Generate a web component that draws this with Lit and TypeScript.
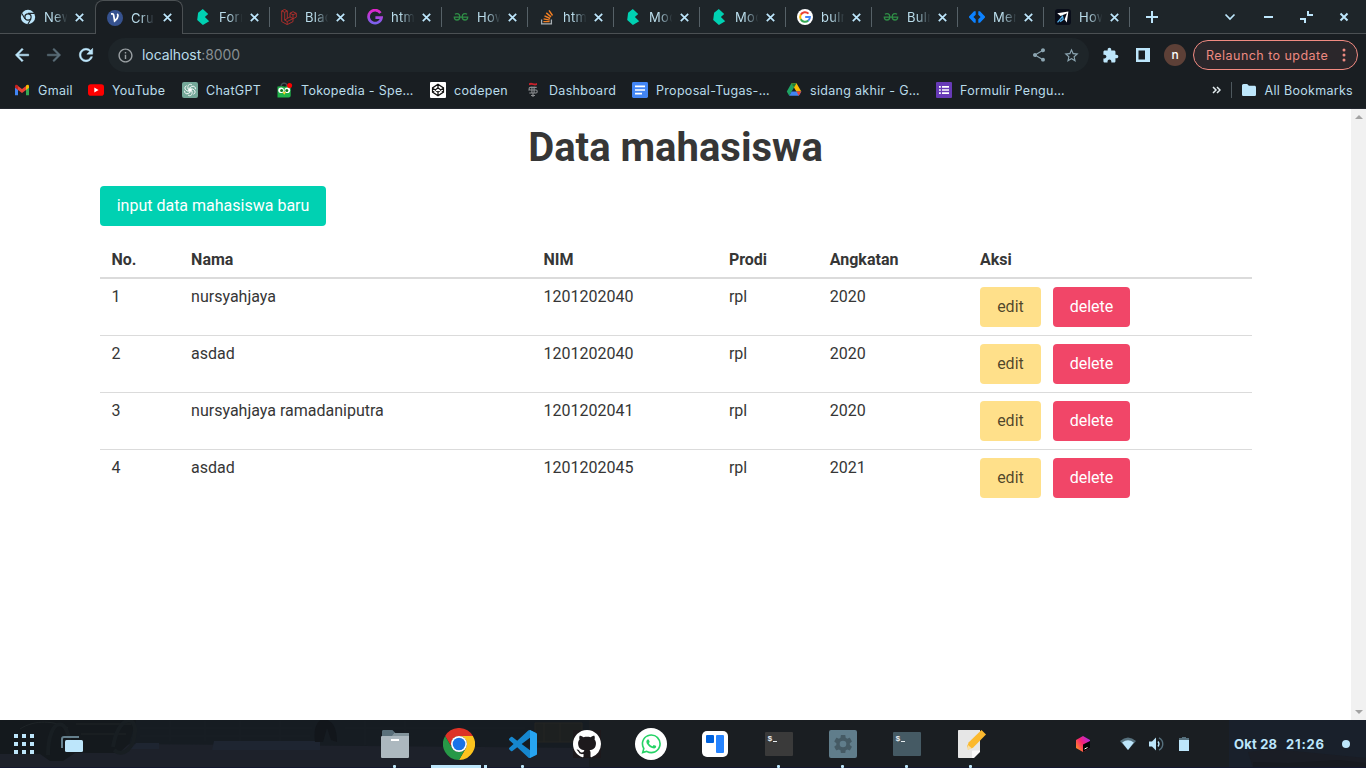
import { LitElement, html, css, svg } from "lit";
import { customElement } from "lit/decorators.js";

const ICE = "#bde6fb";

const icon = (size: number, box: number, body: unknown) =>
  html`<svg width=${size} height=${size} viewBox="0 0 ${box} ${box}" fill="none">${body}</svg>`;

/* ---------- favicons ---------- */
const chromeMono = icon(16, 16, svg`
  <circle cx="8" cy="8" r="7.2" fill=${ICE}/>
  <circle cx="8" cy="8" r="3.7" fill="#1e2529"/>
  <path d="M8 4.4H14.6M4.9 9.7 1.9 4.4M11 9.8 7.7 15.6" stroke="#1e2529" stroke-width="1.1"/>
  <circle cx="8" cy="8" r="2.5" fill=${ICE}/>`);
const vIcon = icon(16, 16, svg`
  <circle cx="8" cy="8" r="8" fill="#36528f"/>
  <path d="M4 3.900h1.500c.7 0 1 .4 1.100 1L7.600 11c2-1.600 3.400-3.600 3.400-5.300 0-.8-.3-1.300-.9-1.700" stroke="#fff" stroke-width="1.700"/>`);
const bulma = icon(16, 16, svg`<path d="m2.2 11 .9-7.3L7.8 0l5.4 5-3.3 3 4.3 4.3L7.9 16z" fill="#00d1b2"/>`);
const laravel = icon(16, 16, svg`
  <path d="M.7 1.9 3.6.5l2.7 1.4v7.5l2.7-1.5V4.2L12 2.7l3.3 1.6v3.8L12 9.8v2.8l-5.8 3-5.5-3zM.7 1.9l3 1.4 2.6-1.4M3.7 3.3v7.8l2.5 1.4 5.8-2.9M6.2 12.5v3M9 4.2l3 1.6 3.3-1.5M12 5.8v3.9M9 7.9l3 1.8M6.3 9.4l-2.6 1.7" stroke="#b52f2b" stroke-width=".9"/>`);
const gPurple = icon(16, 16, svg`
  <defs><linearGradient id="gp" x1="0" y1="0" x2="0" y2="1"><stop stop-color="#e024c8"/><stop offset="1" stop-color="#7c62ee"/></linearGradient></defs>
  <path d="M13.5 4A6.5 6.5 0 1 0 14.5 8.7H8.4" stroke="url(#gp)" stroke-width="2.7"/>`);
const gfg = icon(16, 16, svg`
  <path d="M1.9 5.2c2.4-1.3 4.9-.2 4.9 2.5 0 2.2-1.2 3.3-2.8 3.3-1.5 0-2.6-.9-2.7-2.8H14.7c-.1 1.9-1.2 2.8-2.7 2.8-1.6 0-2.8-1.1-2.8-3.3 0-2.7 2.5-3.8 4.9-2.5" stroke="#2f8d46" stroke-width="1.3"/>`);
const stack = icon(16, 16, svg`
  <path d="M2.6 10.6v4.3h9.8v-4.3" stroke="#a9b0b4" stroke-width="1.3"/>
  <path d="M4.4 12.6h6.2M4.6 9.9l6.1 1.2M5.5 6.9l5.6 2.6M7.3 3.9l4.7 4M10 1.4l3.5 5.1" stroke="#f48024" stroke-width="1.4"/>`);
const google = icon(16, 16, svg`
  <circle cx="8" cy="8" r="8" fill="#fff"/>
  <g stroke-width="2"><path d="M11.5 4.6A4.9 4.9 0 0 0 3.7 5.8" stroke="#ea4335"/>
  <path d="M3.8 5.6a4.9 4.9 0 0 0 0 4.8" stroke="#fbbc05"/>
  <path d="M3.7 10.2a4.9 4.9 0 0 0 7.6 1.4" stroke="#34a853"/>
  <path d="M11.2 11.7A4.9 4.9 0 0 0 12.9 8H8.2" stroke="#4285f4"/></g>`);
const diamonds = icon(16, 16, svg`
  <path d="M6.7 2.2v3.5L4.4 8l2.3 2.3v3.5H5L0 8.6V7.4l5-5.2zM9.3 2.2v3.5L11.6 8l-2.3 2.3v3.5H11l5-5.2V7.4l-5-5.2z" fill="#0c82ff"/>`);
const plane = icon(16, 16, svg`
  <rect width="16" height="16" rx="3" fill="#090d19"/>
  <path d="M2.2 4.2 13.4 2.5 11.8 13.6 9.6 10.4 12 4.2 5.6 7z" fill="#fff"/>
  <path d="m2.5 13.3 5-5.8.8 3.3M5 12.6l2.8-2" stroke="#52aee8" stroke-width="1.3"/>`);

/* ---------- bookmark icons ---------- */
const gmail = icon(16, 16, svg`
  <path d="M1 4v9.3h3V6.8z" fill="#4285f4"/><path d="M15 4v9.3h-3V6.8z" fill="#34a853"/>
  <path d="M4 3.9v4L8 11l4-3.1v-4L8 7z" fill="#ea4335"/>
  <path d="M1 4.4C1 2.7 2.6 2.4 4 3.6v4.3L1 5.8z" fill="#c5221f"/>
  <path d="M15 4.4c0-1.7-1.6-2-3-.8v4.3l3-2.1z" fill="#fbbc04"/>`);
const youtube = icon(16, 16, svg`<rect y="2.3" width="16" height="11.4" rx="2.8" fill="#f00"/><path d="m6.3 5.6 4.3 2.4-4.3 2.4z" fill="#fff"/>`);
const chatgpt = icon(16, 16, svg`
  <rect width="16" height="16" rx="2" fill="#74a899"/>
  <g stroke="#fff" stroke-width=".85">
  ${[0, 60, 120, 180, 240, 300].map((a) => svg`<path transform="rotate(${a} 8 8)" d="M5.9 6.9V4.7a2.4 2.4 0 0 1 4.1-1.7M5.9 6.9l4 2.3"/>`)}</g>`);
const tokopedia = icon(16, 16, svg`
  <path d="M4 4.200C4.500.2 9.500.2 10 4" stroke="#465057" stroke-width="1.200"/>
  <path d="M.5 4.400c3 .2 5-.6 6.900.4 1.500-1 3.600-.6 6.300-.4v9c0 1.200-.8 2-2 2H.5z" fill="#21b34a"/>
  <circle cx="4.100" cy="8.300" r="2.800" fill="#fff"/><circle cx="10.300" cy="8.300" r="2.800" fill="#fff"/>
  <circle cx="4.600" cy="8.400" r="1.500" fill="#172"/><circle cx="9.800" cy="8.400" r="1.500" fill="#172"/>
  <path d="m5.700 10.600 1.500-1.200 1.600 1.200-1.600 2.200z" fill="#ffd32b"/><circle cx="12.600" cy="3.500" r="2.500" fill="#f00"/>`);
const codepen = icon(16, 16, svg`
  <rect width="16" height="16" rx="1" fill="#fff"/>
  <path d="m8 2.3 5.5 3.6v4.2L8 13.7l-5.5-3.6V5.9zM8 2.3v3.5M8 10.2v3.5M2.5 5.9 8 10.2l5.5-4.3M2.5 10.1 8 5.8l5.5 4.3" stroke="#111" stroke-width="1.2"/>`);
const telkom = icon(16, 16, svg`
  <path d="M4 1.2q2-.8 4 0t4-.2V3q-2 .8-4 0T4 3.2z" fill="#c9202a"/>
  <path d="M11.700 5.400H5.200c-1.400 0-1.400 2.600 0 2.600H11c1.600 0 1.600 3 0 3H4.300M6.900 4.500v6.800M9.100 4.500v6.800M8 11v4M6 13.500h4M5.300 8h-2" stroke="#8b8d90" stroke-width="1.100"/>`);
const docs = icon(16, 16, svg`<rect width="16" height="16" rx="1.400" fill="#4285f4"/><path d="M3 4.400h10M3 8h10M3 11.600h7" stroke="#fff" stroke-width="1.600"/>`);
const drive = icon(16, 16, svg`
  <path d="M5.400 1.200 8 5.600l-4.800 8.200L.8 9.600z" fill="#1fa463"/>
  <path d="M5.400 1.200h5.100l4.800 8.400h-4.900L8 5.500z" fill="#fbbc04"/>
  <path d="M5.400 1.200h5.100L8 5.600z" fill="#188038"/>
  <path d="M5.700 9.600h9.600l-2.500 4.200H3.200z" fill="#4285f4"/><path d="M10.400 9.600h4.900l-2.500 4.200z" fill="#ea4335"/>`);
const forms = icon(16, 16, svg`<rect width="16" height="16" rx="1" fill="#673ab7"/><path d="M6 4.800h7M6 8h7M6 11.200h7M3 4.800h1.800M3 8h1.800M3 11.200h1.800" stroke="#fff" stroke-width="1.700"/>`);
const folder = icon(16, 16, svg`<path d="M1 3.800C1 2.700 1.600 2 2.600 2h3.600l1.700 1.800h5.500c1 0 1.600.6 1.600 1.600v7c0 1-.6 1.600-1.600 1.600H2.600C1.600 14 1 13.400 1 12.400z" fill=${ICE}/>`);

/* ---------- toolbar icons ---------- */
const back = svg`<path fill="currentColor" stroke="currentColor" stroke-width=".6" d="M20 11H7.83l5.59-5.59L12 4l-8 8 8 8 1.41-1.41L7.83 13H20v-2z"/>`;
const reload = svg`<path fill="currentColor" d="M17.65 6.35C16.2 4.9 14.21 4 12 4c-4.42 0-7.99 3.58-7.99 8s3.57 8 7.99 8c3.73 0 6.84-2.55 7.73-6h-2.08c-.82 2.33-3.04 4-5.65 4-3.31 0-6-2.69-6-6s2.69-6 6-6c1.66 0 3.14.69 4.22 1.78L13 11h7V4l-2.35 2.35z" stroke="currentColor" stroke-width=".6"/>`;
const info = svg`<path fill="currentColor" d="M11 7h2v2h-2zm0 4h2v6h-2zm1-9C6.48 2 2 6.48 2 12s4.48 10 10 10 10-4.48 10-10S17.52 2 12 2zm0 18c-4.41 0-8-3.59-8-8s3.59-8 8-8 8 3.59 8 8-3.59 8-8 8z"/>`;
const share = svg`<path fill="currentColor" d="M18 16.08c-.76 0-1.44.3-1.96.77L8.91 12.7c.05-.23.09-.46.09-.7s-.04-.47-.09-.7l7.05-4.11c.54.5 1.25.81 2.04.81 1.66 0 3-1.34 3-3s-1.34-3-3-3-3 1.34-3 3c0 .24.04.47.09.7L8.04 9.81C7.5 9.31 6.79 9 6 9c-1.66 0-3 1.34-3 3s1.34 3 3 3c.79 0 1.5-.31 2.04-.81l7.12 4.16c-.05.21-.08.43-.08.65 0 1.61 1.31 2.92 2.92 2.92 1.61 0 2.92-1.31 2.92-2.92s-1.31-2.92-2.92-2.92z"/>`;
const star = svg`<path fill="currentColor" d="M22 9.24l-7.19-.62L12 2 9.19 8.63 2 9.24l5.46 4.73L5.82 21 12 17.27 18.18 21l-1.63-7.03L22 9.24zM12 15.4l-3.76 2.27 1-4.28-3.32-2.88 4.38-.38L12 6.1l1.71 4.04 4.38.38-3.32 2.88 1 4.28L12 15.4z"/>`;
const puzzle = svg`<path fill="currentColor" d="M20.5 11H19V7c0-1.1-.9-2-2-2h-4V3.5C13 2.12 11.88 1 10.5 1S8 2.12 8 3.5V5H4c-1.1 0-1.99.9-1.99 2v3.8H3.5c1.49 0 2.7 1.21 2.7 2.7s-1.21 2.7-2.7 2.7H2V20c0 1.1.9 2 2 2h3.8v-1.5c0-1.49 1.21-2.7 2.7-2.7 1.49 0 2.7 1.21 2.7 2.7V22H17c1.1 0 2-.9 2-2v-4h1.5c1.38 0 2.5-1.12 2.5-2.5S21.88 11 20.5 11z"/>`;
const closeX = icon(9, 9, svg`<path d="m.8.8 7.400 7.400M8.200.8.8 8.200" stroke=${ICE} stroke-width="1.700"/>`);

/* ---------- dock icons ---------- */
const files = icon(32, 32, svg`
  <path d="M3 3.500C3 2.600 3.500 2 4.400 2h9l3 3H28c.8 0 1.300.5 1.300 1.300V9H3z" fill="#5a707b"/>
  <path d="M2 9.200C2 8.500 2.600 8 3.300 8h10l2.500-3H28.600c.8 0 1.400.5 1.400 1.300v22.400c0 .8-.6 1.300-1.300 1.300H3.300C2.600 30 2 29.500 2 28.700z" fill="#acb8bf"/>
  <path d="M13.300 8l2.500-3h12.900c.6 0 1.300.5 1.300 1.300V8z" fill="#82939b"/><rect x="12" y="11" width="8" height="2" fill="#fff"/>`);
const chrome = icon(32, 48, svg`
  <path d="M3.200 12A24 24 0 0 1 44.800 12H24A12 12 0 0 0 13.600 30Z" fill="#dd3226"/>
  <path d="M44.800 12A24 24 0 0 1 24 48L34.400 30A12 12 0 0 0 24 12Z" fill="#fcc31e"/>
  <path d="M24 48A24 24 0 0 1 3.200 12L13.600 30A12 12 0 0 0 34.400 30Z" fill="#279847"/>
  <circle cx="24" cy="24" r="12" fill="#fff"/><circle cx="24" cy="24" r="9.500" fill="#1a73e8"/>`);
const vscode = icon(28, 24, svg`
  <path fill="#1687cf" d="M23.15 2.587L18.21.21a1.494 1.494 0 0 0-1.705.29l-9.46 8.63-4.12-3.128a.999.999 0 0 0-1.276.057L.327 7.261A1 1 0 0 0 .326 8.74L3.899 12 .326 15.26a1 1 0 0 0 .001 1.479L1.65 17.94a.999.999 0 0 0 1.276.057l4.12-3.128 9.46 8.63a1.492 1.492 0 0 0 1.704.29l4.942-2.377A1.5 1.5 0 0 0 24 20.06V3.939a1.5 1.5 0 0 0-.85-1.352zm-5.146 14.861L10.826 12l7.178-5.448v10.896z"/>
  <path d="M18 .1 23.150 2.587A1.500 1.500 0 0 1 24 3.939v16.120a1.500 1.500 0 0 1-.85 1.350L18 23.900z" fill="#27a4f1"/>`);
const github = icon(28, 16, svg`
  <rect width="16" height="16" fill="#1d191c"/>
  <path fill="#fff" d="M8 0C3.58 0 0 3.58 0 8c0 3.54 2.29 6.53 5.47 7.59.4.07.55-.17.55-.38 0-.19-.01-.82-.01-1.49-2.01.37-2.53-.49-2.69-.94-.09-.23-.48-.94-.82-1.13-.28-.15-.68-.52-.01-.53.63-.01 1.08.58 1.23.82.72 1.21 1.87.87 2.33.66.07-.52.28-.87.51-1.07-1.78-.2-3.64-.89-3.64-3.95 0-.87.31-1.59.82-2.15-.08-.2-.36-1.02.08-2.12 0 0 .67-.21 2.2.82.64-.18 1.32-.27 2-.27s1.36.09 2 .27c1.53-1.04 2.2-.82 2.2-.82.44 1.1.16 1.92.08 2.12.51.56.82 1.27.82 2.15 0 3.07-1.87 3.75-3.65 3.95.29.25.54.73.54 1.48 0 1.07-.01 1.93-.01 2.2 0 .21.15.46.55.38A8.01 8.01 0 0 0 16 8c0-4.42-3.58-8-8-8z"/>`);
const whatsapp = icon(32, 32, svg`
  <circle cx="16" cy="16" r="16" fill="#fff"/>
  <path transform="translate(6.500 6.200) scale(.81)" fill="#25d366" d="M17.472 14.382c-.297-.149-1.758-.867-2.03-.967-.273-.099-.471-.148-.67.15-.197.297-.767.966-.94 1.164-.173.199-.347.223-.644.075-.297-.15-1.255-.463-2.39-1.475-.883-.788-1.48-1.761-1.653-2.059-.173-.297-.018-.458.13-.606.134-.133.298-.347.446-.52.149-.174.198-.298.298-.497.099-.198.05-.371-.025-.52-.075-.149-.669-1.612-.916-2.207-.242-.579-.487-.5-.669-.51-.173-.008-.371-.01-.57-.01-.198 0-.52.074-.792.372-.272.297-1.04 1.016-1.04 2.479 0 1.462 1.065 2.875 1.213 3.074.149.198 2.096 3.2 5.077 4.487.709.306 1.262.489 1.694.625.712.227 1.36.195 1.871.118.571-.085 1.758-.719 2.006-1.413.248-.694.248-1.289.173-1.413-.074-.124-.272-.198-.57-.347m-5.421 7.403h-.004a9.87 9.87 0 01-5.031-1.378l-.361-.214-3.741.982.998-3.648-.235-.374a9.86 9.86 0 01-1.51-5.26c.001-5.45 4.436-9.884 9.888-9.884 2.64 0 5.122 1.03 6.988 2.898a9.825 9.825 0 012.893 6.994c-.003 5.45-4.437 9.884-9.885 9.884m8.413-18.297A11.815 11.815 0 0012.05 0C5.495 0 .16 5.335.157 11.892c0 2.096.547 4.142 1.588 5.945L.057 24l6.305-1.654a11.882 11.882 0 005.683 1.448h.005c6.554 0 11.89-5.335 11.893-11.893a11.821 11.821 0 00-3.48-8.413z"/>`);
const board = icon(32, 32, svg`
  <rect x="3" y="3" width="26" height="26" rx="5" fill="#fff"/><rect x="7" y="7" width="8" height="8" rx="1" fill="#0062dd"/><rect x="17" y="7" width="8" height="18" rx="1" fill="#2684ff"/>`);
const terminal = (bg: string) => icon(32, 32, svg`
  <rect x="2" y="4" width="28" height="24" rx="1" fill=${bg}/>
  <text x="4.500" y="13" font-family="Liberation Mono" font-size="8" font-weight="700" fill="#e5ecef">$</text><path d="M10 13.500h4" stroke="#e5ecef"/>`);
const settings = icon(32, 32, svg`
  <rect x="2" y="2" width="28" height="28" rx="2" fill="#607d8b"/>
  <path transform="translate(4.800 4.800) scale(.94)" fill="#455a64" d="M19.14 12.94c.04-.3.06-.61.06-.94 0-.32-.02-.64-.07-.94l2.03-1.58c.18-.14.23-.41.12-.61l-1.92-3.32c-.12-.22-.37-.29-.59-.22l-2.39.96c-.5-.38-1.03-.7-1.62-.94l-.36-2.54c-.04-.24-.24-.41-.48-.41h-3.84c-.24 0-.43.17-.47.41l-.36 2.54c-.59.24-1.13.57-1.62.94l-2.39-.96c-.22-.08-.47 0-.59.22L2.74 8.87c-.12.21-.08.47.12.61l2.03 1.58c-.05.3-.09.63-.09.94s.02.64.07.94l-2.03 1.58c-.18.14-.23.41-.12.61l1.92 3.32c.12.22.37.29.59.22l2.39-.96c.5.38 1.03.7 1.62.94l.36 2.54c.05.24.24.41.48.41h3.84c.24 0 .44-.17.47-.41l.36-2.54c.59-.24 1.13-.56 1.62-.94l2.39.96c.22.08.47 0 .59-.22l1.92-3.32c.12-.22.07-.47-.12-.61l-2.01-1.58z"/>
  <circle cx="16" cy="16" r="3.300" fill="#607d8b"/>`);
const editor = icon(32, 32, svg`
  <path d="M4 2h21v20.500L18 30H4c-.6 0-1-.4-1-1V3c0-.6.400-1 1-1z" fill="#e6e6e6"/>
  <path d="M25 22.500V24l-6 6h-2v-6.500c0-.6.400-1 1-1z" fill="#fafafa"/>
  <path d="m12.200 18 1.600-3.800L26.500 2l4.500 4.500L18 19.800l-4.800 1.600z" fill="#fbb92e"/><path d="m13 17 4 3.500-4.700 1.200z" fill="#f9dfa5"/>`);

const tabs: [unknown, string][] = [
  [chromeMono, "New"], [vIcon, "Crud"], [bulma, "Form"], [laravel, "Blad"],
  [gPurple, "html"], [gfg, "How"], [stack, "html"], [bulma, "Mod"], [bulma, "Mod"],
  [google, "bulm"], [gfg, "Bulm"], [diamonds, "Men"], [plane, "How"],
];

const bookmarks: [unknown, string, number][] = [
  [gmail, "Gmail", 74], [youtube, "YouTube", 94], [chatgpt, "ChatGPT", 95], [tokopedia, "Tokopedia - Spe…", 153],
  [codepen, "codepen", 95], [telkom, "Dashboard", 107], [docs, "Proposal-Tugas-…", 154],
  [drive, "sidang akhir - G…", 150], [forms, "Formulir Pengu…", 140],
];

const students = [
  ["1", "nursyahjaya", "1201202040", "rpl", "2020"],
  ["2", "asdad", "1201202040", "rpl", "2020"],
  ["3", "nursyahjaya ramadaniputra", "1201202041", "rpl", "2020"],
  ["4", "asdad", "1201202045", "rpl", "2021"],
];

@customElement("browser-chrome")
class BrowserChrome extends LitElement {
  static styles = css`
    :host { display: block; height: 109px; background: #191e22; color: #b9dcea; font: 13px/16px Inter, sans-serif; box-sizing: border-box; border-bottom: 1px solid #23272f; }
    svg { display: block; flex: none; }
    .strip { display: flex; height: 34px; background: linear-gradient(#4b5053, #4b5053) bottom / 100% 1px no-repeat #1e2529; padding-left: 11px; box-sizing: border-box; }
    .tab { display: flex; align-items: center; width: 86px; height: 34px; padding-left: 11px; box-sizing: border-box; flex: none; background: linear-gradient(#566167, #566167) right 7px / 1px 20px no-repeat; }
    .tab.plain { background: none; padding-left: 9px; }
    .tab.active { background: #191e22; width: 88px; margin: 0 1px 0 -2px; padding-left: 11px; border: 1px solid #4b5053; border-bottom: 0; border-radius: 8px 8px 0 0; }
    .name { width: 24px; margin: 0 7px 0 8px; overflow: hidden; white-space: nowrap; letter-spacing: .3px; -webkit-mask-image: linear-gradient(90deg, #000 40%, transparent 98%); mask-image: linear-gradient(90deg, #000 40%, transparent 98%); }
    .active .name { margin-right: 8px; }
    .controls { display: flex; align-items: center; width: 237px; height: 34px; color: #bde6fb; flex: none; margin-left: -1px; }
    .bar { display: flex; align-items: center; height: 42px; color: #bde6fb; padding: 0 8px 0 12px; }
    .nav { display: flex; gap: 12px; width: 96px; flex: none; }
    .dim { color: #5b6e79; }
    .fwd { transform: scaleX(-1); }
    .omni { display: flex; flex: none; align-items: center; width: 981px; height: 34px; box-sizing: border-box; border-radius: 17px; background: #1e2529; padding: 0 9px 0 9px; color: #9aa0a3; }
    .url { flex: 1; font-size: 14px; margin-left: 8px; letter-spacing: -.07px; color: #878e91; }
    .host { color: #b9dcea; }
    .end { display: flex; align-items: center; gap: 16px; color: #8ca5b1; }
    .tools { display: flex; align-items: center; margin-left: 13px; gap: 13px; flex: none; }
    .panel { margin-left: 3px; }
    .avatar { width: 22px; height: 22px; border-radius: 50%; background: #5d4037; color: #fff; text-align: center; line-height: 21px; font-size: 12px; font-weight: 500; }
    .relaunch { display: flex; align-items: center; justify-content: space-between; width: 165px; height: 30px; border: 1px solid #f28b82; border-radius: 15px; box-sizing: border-box; background: #2b272b; color: #ee8a81; margin-left: -6px; padding: 0 11px 0 12px; font-size: 12.500px; letter-spacing: .46px; white-space: nowrap; }
    .label { margin-top: 1px; }
    .marks { display: flex; align-items: center; height: 28px; padding: 0 14px; }
    .mark { display: flex; align-items: center; gap: 8px; white-space: nowrap; font-size: 12.500px; letter-spacing: .3px; flex: none; }
    .mark span { padding-top: 1px; }
    .rest { display: flex; align-items: center; margin-left: auto; margin-right: -1px; }
    .div { width: 1px; height: 16px; background: #4e585e; margin: 0 9px 0 10px; }
  `;
  render() {
    return html`
      <div class="strip">
        ${tabs.map(([ic, name], i) => html`<div class="tab ${i === 1 ? "active" : i === 0 ? "plain" : ""}">${ic}<span class="name">${name}</span>${closeX}</div>`)}
        <div class="controls"><svg width="237" height="34" viewBox="0 0 237 34" fill="none" stroke="currentColor" stroke-width="2">
          <path d="M17 17h12M23 11v12M135 17h9"/><path d="m96.500 14.500 4.500 4.500 4.500-4.500" stroke-width="1.700"/>
          <path d="M171 19h5v4M179 11v4h5" /><path d="m211.500 13.500 7 7m0-7-7 7"/></svg></div>
      </div>
      <div class="bar">
        <div class="nav">${icon(20, 24, back)}<span class="dim fwd">${icon(20, 24, back)}</span>${icon(20, 24, reload)}</div>
        <div class="omni">${icon(17, 24, info)}<span class="url"><span class="host">localhost</span>:8000</span>
          <div class="end">${icon(16, 24, share)}${icon(17, 24, star)}</div></div>
        <div class="tools">${icon(17, 24, puzzle)}
          <span class="panel">${icon(16, 16, svg`<path d="M1 1h14v14H1zM3.500 3.500v9h6.500v-9z" fill="currentColor" fill-rule="evenodd"/>`)}</span>
          <span class="avatar">n</span>
          <div class="relaunch"><span class="label">Relaunch to update</span><svg width="4" height="14" viewBox="0 0 4 14" fill="currentColor"><circle cx="2" cy="2" r="1.500"/><circle cx="2" cy="7" r="1.500"/><circle cx="2" cy="12" r="1.500"/></svg></div>
        </div>
      </div>
      <div class="marks">
        ${bookmarks.map(([ic, name, w]) => html`<div class="mark" style="width:${w}px">${ic}<span>${name}</span></div>`)}
        <div class="rest">
          <svg width="9" height="8" viewBox="0 0 9 8" fill="none"><path d="m1 1 3 3-3 3M5 1l3 3-3 3" stroke="#e3ecef" stroke-width="1.500"/></svg>
          <i class="div"></i><div class="mark">${folder}<span>All Bookmarks</span></div>
        </div>
      </div>`;
  }
}

@customElement("student-page")
class StudentPage extends LitElement {
  static styles = css`
    :host { display: flex; height: 611px; background: #fff; color: #363636; font: 16px/19px Roboto, sans-serif; }
    .main { flex: 1; padding: 16px 99px 0 100px; }
    h1 { margin: 0; padding-right: 1px; font-size: 40px; line-height: 45px; font-weight: 700; text-align: center; }
    .btn { display: flex; align-items: center; justify-content: center; height: 40px; padding: 0 0 1px; border-radius: 4px; box-sizing: border-box; color: #fff; flex: none; }
    .new { width: 226px; background: #00d1b2; margin: 16px 0; white-space: nowrap; }
    table { width: 100%; table-layout: fixed; border-collapse: separate; border-spacing: 0; }
    th, td { box-sizing: border-box; padding: 8px 11.500px; }
    th { text-align: left; font-weight: 700; border-bottom: 2px solid #dbdbdb; }
    td { height: 57px; vertical-align: top; border-bottom: 1px solid #dbdbdb; }
    tr:last-child td { border-bottom: 0; }
    .no { width: 79.600px; } .nama { width: 352.400px; } .nim { width: 185.400px; } .prodi { width: 100.900px; } .angkatan { width: 150.200px; }
    .acts { display: flex; gap: 12px; }
    .edit { width: 61px; background: #ffe08a; color: rgba(0, 0, 0, .7); }
    .delete { width: 77px; background: #f14668; }
    .scroll { width: 15px; background: #f1f1f1; display: flex; flex-direction: column; justify-content: space-between; align-items: center; padding: 6px 0; box-sizing: border-box; }
  `;
  render() {
    return html`
      <div class="main">
        <h1>Data mahasiswa</h1>
        <a class="btn new">input data mahasiswa baru</a>
        <table>
          <thead><tr><th class="no">No.</th><th class="nama">Nama</th><th class="nim">NIM</th><th class="prodi">Prodi</th><th class="angkatan">Angkatan</th><th>Aksi</th></tr></thead>
          <tbody>${students.map((s) => html`<tr>${s.map((v) => html`<td>${v}</td>`)}<td><div class="acts"><a class="btn edit">edit</a><a class="btn delete">delete</a></div></td></tr>`)}</tbody>
        </table>
      </div>
      <div class="scroll">
        <svg width="8" height="4" viewBox="0 0 8 4"><path d="m0 4 4-4 4 4z" fill="#a3a3a3"/></svg>
        <svg width="8" height="4" viewBox="0 0 8 4"><path d="m0 0 4 4 4-4z" fill="#a3a3a3"/></svg>
      </div>`;
  }
}

@customElement("desktop-panel")
class DesktopPanel extends LitElement {
  static styles = css`
    :host { display: flex; position: relative; height: 48px; box-sizing: border-box; color: #bde6fb; font: 700 13px/16px Inter, sans-serif; background: #1a1e22; overflow: hidden; }
    svg { display: block; }
    .wall { position: absolute; left: 0; top: 0; }
    .left { position: relative; display: flex; align-items: center; gap: 27px; width: 349px; padding-left: 14px; }
    .dock { position: relative; display: flex; width: 640px; }
    .app { display: flex; flex-direction: column; align-items: center; width: 64px; height: 48px; flex: none; }
    .pic { display: flex; align-items: center; justify-content: center; width: 32px; height: 32px; margin: 8px 0 5px; }
    .run { width: 3px; height: 3px; background: #bde6fb; border-radius: 1px; margin-right: 2px; }
    .marks { display: flex; gap: 3px; }
    .marks .extra { width: 3px; height: 3px; background: #bde6fb; }
    .marks .run { border-radius: 0; width: 50px; margin: 0; }
    .none { width: 3px; height: 3px; }
    .tray { position: relative; display: flex; align-items: center; margin-left: auto; padding-right: 16px; white-space: pre; }
    .toolbox { margin-right: 29px; } .wifi { margin-right: 13px; } .vol { margin-right: 15px; } .bat { margin-right: 45px; }
    .date { width: 52px; letter-spacing: .2px; margin-top: -1px; }
    .time { width: 39px; letter-spacing: .8px; margin-top: -1px; }
    .dot { width: 8px; height: 8px; border-radius: 50%; background: #bde6fb; margin-left: 17px; }
  `;
  render() {
    const apps: [unknown, string][] = [
      [files, "run"], [chrome, "open"], [vscode, "run"], [github, ""], [whatsapp, ""], [board, ""],
      [terminal("#3a3a3a"), "run"], [settings, "run"], [terminal("#455a64"), "run"], [editor, "run"],
    ];
    return html`
      <svg class="wall" width="1366" height="48" viewBox="0 0 1366 48" fill="none">
        <path d="M0 0H589V48H0z" fill="#161c22"/>
        <path d="M0 31 130 24l459 4v20H0z" fill="#1d212a"/>
        <path d="M0 0h136l-7 24-10 9H75l-12 8H50l-10-7H0z" fill="#14191d"/>
        <path d="M20 9C35-1 55 1 68 8M76 4h55M81 14h45" stroke="#1e2427"/>
        <path d="M48 35C48-5 70-5 70 30M113 27C118-4 136-6 135 12 134 28 123 38 114 30" stroke="#181e22" stroke-width="4"/>
        <path d="M136 23h23v6h-28zM214 21h106v9H212z" fill="#1e2531"/>
        <path d="M315 22C312-1 325-4 329 1c7 3 8 15 8 21l-6-2-4-12-4 14z" fill="#12161b"/>
        <path d="M140 8h172M345 8h180M140 16h170M170 1v20M205 1v20M240 1v20M280 1v20M365 1v24M405 1v24" stroke="#191f25"/>
        <path d="M535 3h47v19h-47zM544 3v19M560 3v19" stroke="#252523" fill="#1d2020"/>
        <path d="M1229 0h137v48h-137z" fill="#19202b"/>
        <path d="m1248 32 25-3 93 9v10h-113z" fill="#1a1d25"/><path d="m1253 42 35 1 50-3 28 3v5H1253z" fill="#171a20"/>
        <path d="M0 47.500h1366" stroke="#141830"/>
      </svg>
      <div class="left">
        <svg width="20" height="20" viewBox="0 0 20 20" fill="currentColor">${[0, 8, 16].map((y) => [0, 8, 16].map((x) => svg`<rect x=${x} y=${y} width="4" height="4"/>`))}</svg>
        <svg width="22" height="16" viewBox="0 0 22 16"><path d="M1 12V3c0-1.300.7-2 2-2h15" stroke="#65808d" stroke-width="2" fill="none"/><rect x="4" y="4" width="18" height="12" rx="1.500" fill="currentColor"/></svg>
      </div>
      <div class="dock">${apps.map(([ic, s]) => html`<div class="app"><span class="pic">${ic}</span>${
        s === "open" ? html`<span class="marks"><i class="run"></i><i class="extra"></i></span>` : html`<i class=${s || "none"}></i>`}</div>`)}</div>
      <div class="tray">
        <svg class="toolbox" width="16" height="16" viewBox="0 0 16 16"><defs><linearGradient id="tb" x1="0" y1=".8" x2="1" y2="0"><stop stop-color="#ff9222"/><stop offset=".45" stop-color="#fb2273"/><stop offset="1" stop-color="#9b2bff"/></linearGradient></defs><path d="m8 0 7 4v8l-7 4-7-4V4z" fill="url(#tb)"/><path d="m8 8.500 7-3.500v7l-7 4z" fill="#050505"/><path d="m9.500 13 3-1.500" stroke="#fff"/></svg>
        <svg class="wifi" width="16" height="14" viewBox="0 0 16 14"><path d="M0 4Q8-3 16 4L8 13z" fill="#56707d"/><path d="M2.200 5.500Q8 1.200 13.800 5.500L8 13z" fill="currentColor"/></svg>
        <svg class="vol" width="15" height="14" viewBox="0 0 15 14" fill="none"><path d="M0 4.500h3L7 .5v13l-4-4H0z" fill="currentColor"/><path d="M9 4.500q2 2.500 0 5" stroke="currentColor" stroke-width="1.300"/><path d="M10 .9c5 2.500 5 9.700 0 12.200" stroke="#56707d" stroke-width="1.400"/></svg>
        <svg class="bat" width="10" height="14" viewBox="0 0 10 14"><path d="M0 1h3V0h4v1h3v2H0z" fill="#56707d"/><path d="M0 3h10v11H0z" fill="currentColor"/></svg>
        <span class="date">Okt 28</span><span class="time">21:26</span><i class="dot"></i>
      </div>`;
  }
}

@customElement("app-root")
class AppRoot extends LitElement {
  static styles = css`
    :host { display: flex; flex-direction: column; width: 1366px; height: 768px; overflow: hidden; }
  `;
  render() {
    return html`<browser-chrome></browser-chrome><student-page></student-page><desktop-panel></desktop-panel>`;
  }
}
